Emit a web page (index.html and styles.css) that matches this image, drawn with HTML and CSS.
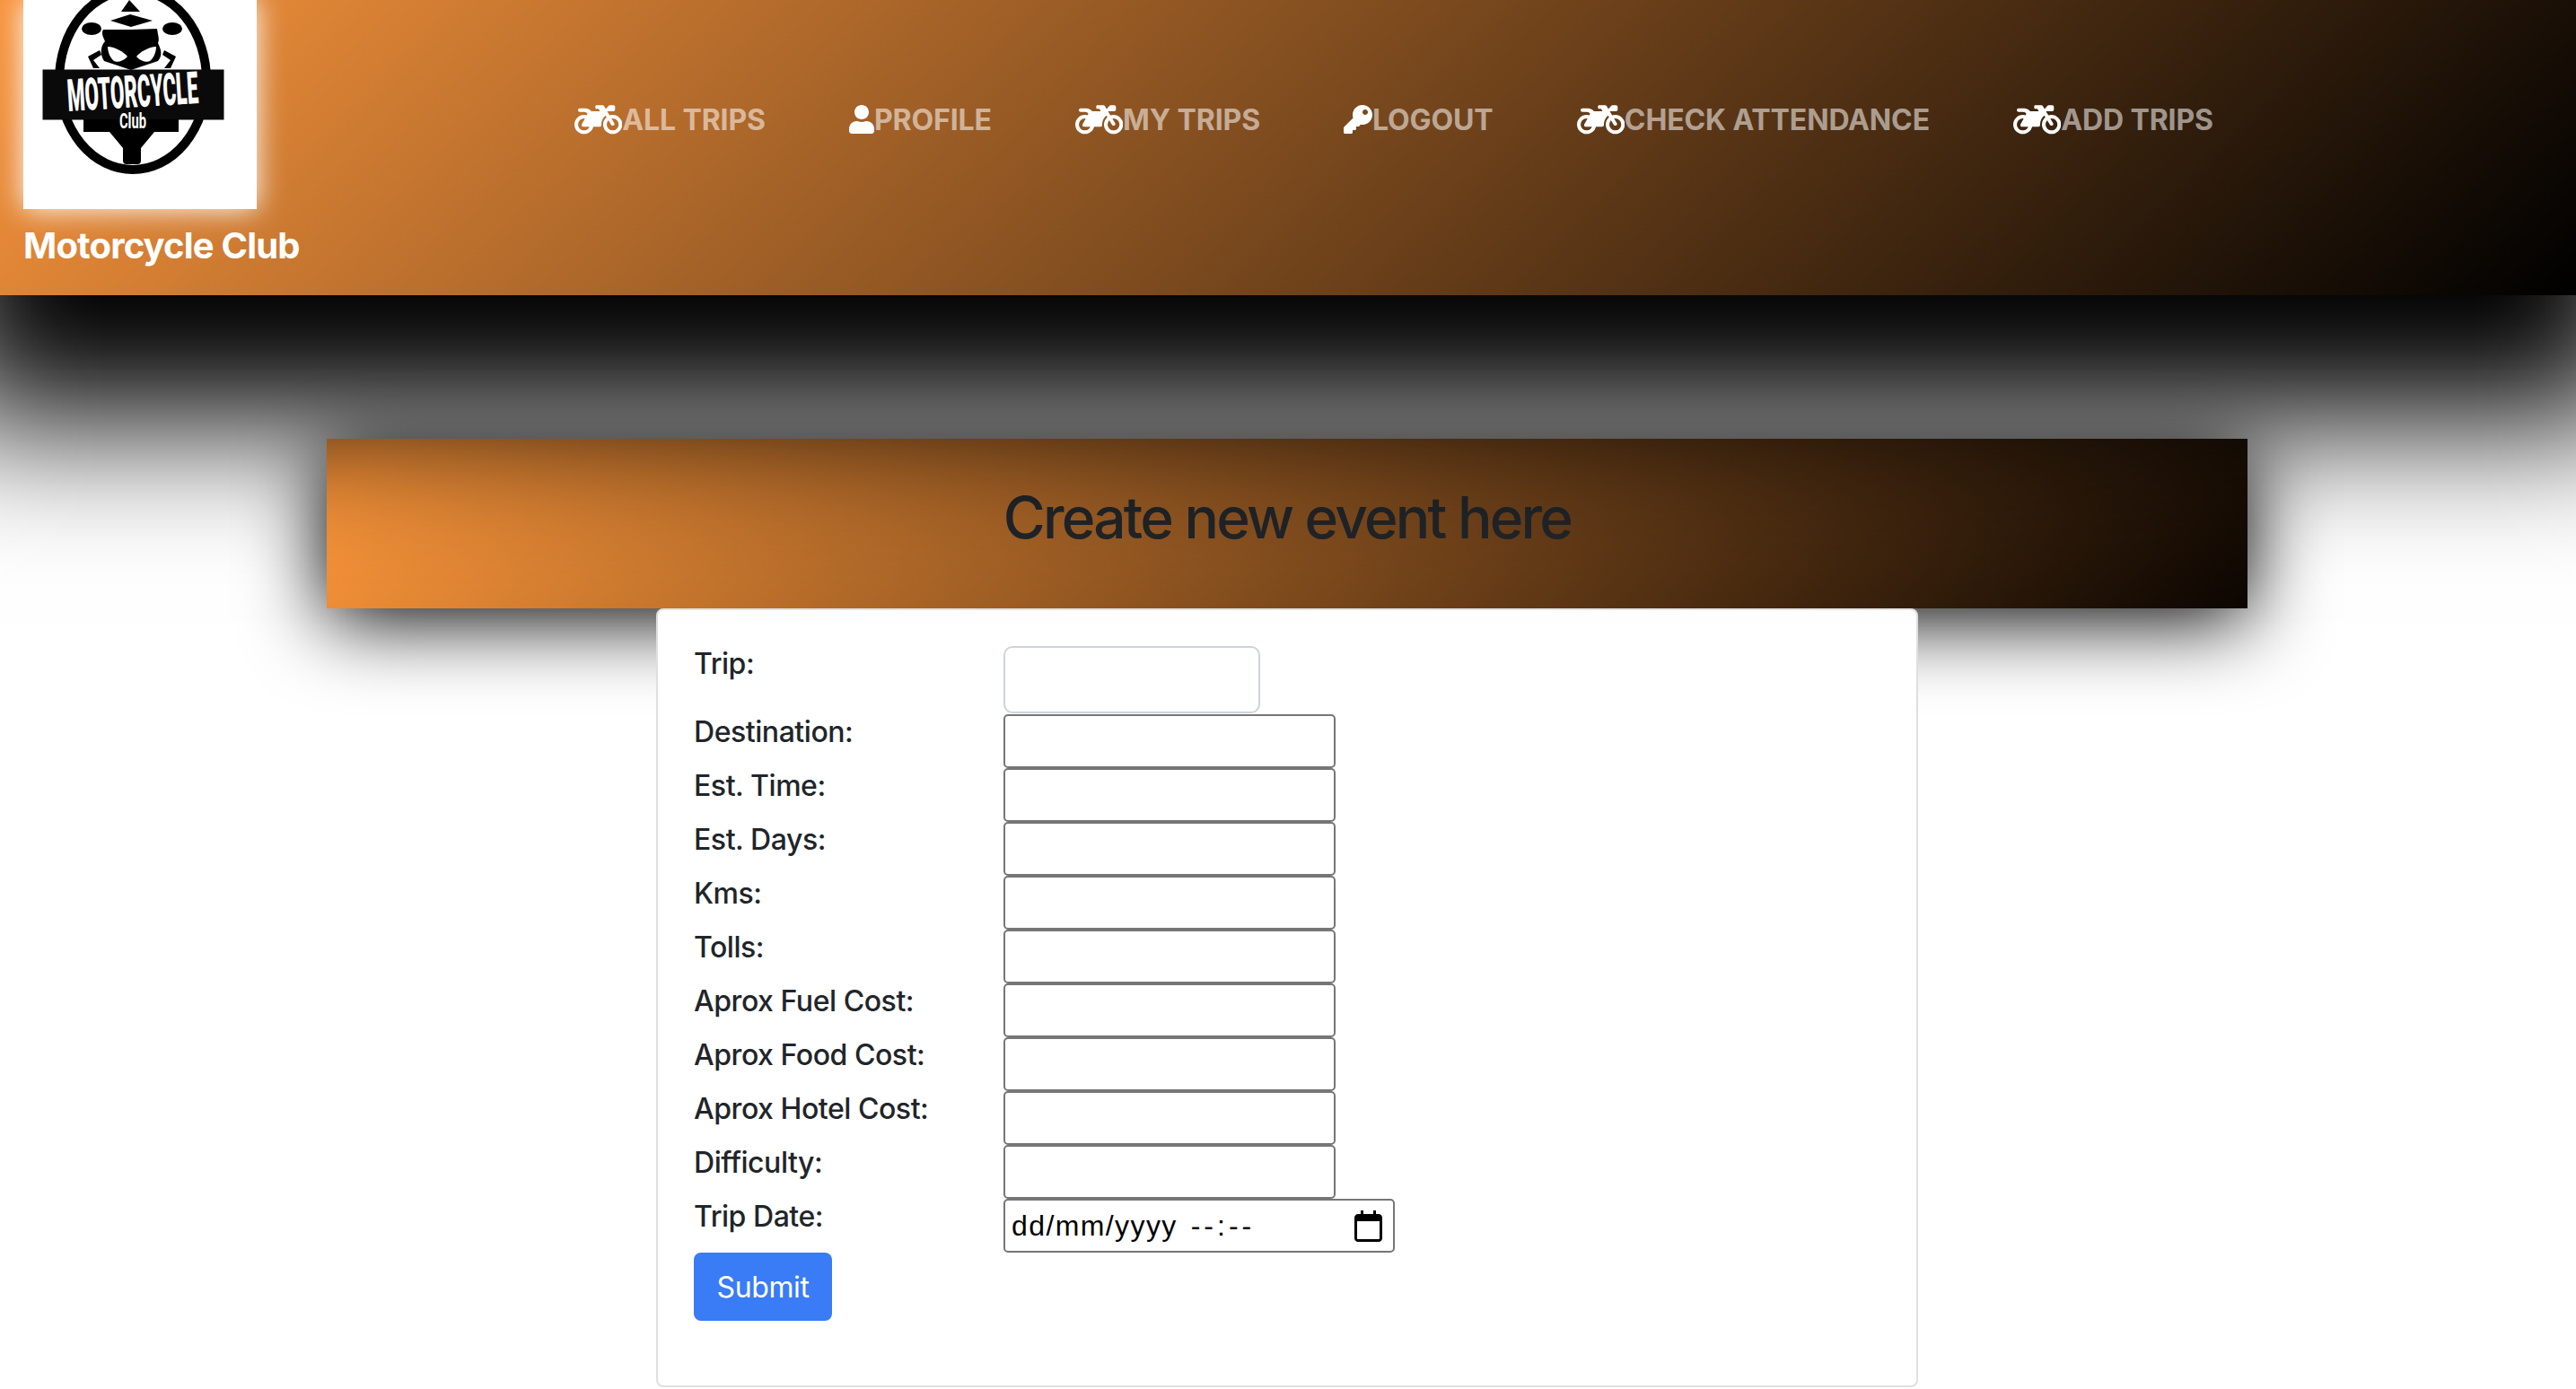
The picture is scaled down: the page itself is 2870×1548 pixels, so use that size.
FILE: index.html
```html
<!DOCTYPE html>
<html lang="en">
<head>
<meta charset="utf-8">
<title>Motorcycle Club</title>
<link rel="stylesheet" href="styles.css">
</head>
<body>
<svg class="defs" width="0" height="0" aria-hidden="true">
  <symbol id="bike" viewBox="0 0 640 512">
    <circle cx="128" cy="320" r="104" fill="none" stroke="#fff" stroke-width="48"/>
    <circle cx="512" cy="320" r="104" fill="none" stroke="#fff" stroke-width="48"/>
    <path fill="#fff" d="M72 104H128C183 104 210 121 228 144H341.6L322.4 112H296C287.2 112 280 104.8 280 96V80C280 71.2 287.2 64 296 64H376C384.4 64 392.2 68.4 396.6 75.7L419.4 113.7L456.9 71.9C461.4 66.9 467.9 64 474.7 64H520C533.3 64 544 74.7 544 88V120C544 133.3 533.3 144 520 144H437.6L532.6 302C539 313 536 327 525 333.5C514 340 499 337 492.5 326L416.2 202C377.5 233 358 280 360 327C360.6 340.6 349.7 352 336 352H118C100.6 352 89 334 98 318L175.8 176.8C166.7 163 152.5 152 128 152H72C58.9 152 48 141.3 48 128C48 114.7 58.9 104 72 104Z"/>
  </symbol>
  <symbol id="user" viewBox="0 0 448 512">
    <path fill="#fff" d="M224 256c70.7 0 128-57.3 128-128S294.7 0 224 0 96 57.3 96 128s57.3 128 128 128zm89.6 32h-16.7c-22.2 10.2-46.9 16-72.9 16s-50.6-5.8-72.9-16h-16.7C60.2 288 0 348.2 0 422.4V464c0 26.5 21.5 48 48 48h352c26.5 0 48-21.5 48-48v-41.6c0-74.2-60.2-134.4-134.4-134.4z"/>
  </symbol>
  <symbol id="key" viewBox="0 0 512 512">
    <path fill="#fff" d="M512 176.001C512 273.203 433.202 352 336 352c-11.22 0-22.19-1.062-32.827-3.069l-24.012 27.014A23.999 23.999 0 0 1 261.223 384H224v40c0 13.255-10.745 24-24 24h-40v40c0 13.255-10.745 24-24 24H24c-13.255 0-24-10.745-24-24v-78.059c0-6.365 2.529-12.47 7.029-16.971l161.802-161.802C163.108 213.814 160 195.271 160 176 160 78.798 238.797.001 335.999 0 433.488-.001 512 78.511 512 176.001zM336 128c0 26.51 21.49 48 48 48s48-21.49 48-48-21.49-48-48-48-48 21.49-48 48z"/>
  </symbol>
</svg>

<header class="site-header">
  <div class="brand">
    <div class="logo">
      <svg class="logo-art" viewBox="26 0 260 233" width="260" height="233">
        <ellipse cx="148" cy="89" rx="82" ry="100" fill="none" stroke="#000" stroke-width="10"/>
        <path d="M144 0L135 13H156Z" fill="#000"/>
        <path d="M123 23L145 16L170 23L146 30Z" fill="#000"/>
        <path d="M115 33L146 33L175 32C176 40 178 44 176 48C180 56 181 62 176 68L146 78L116 68C111 60 112 52 117 46C114 40 113 36 115 33Z" fill="#000"/>
        <ellipse cx="102" cy="32" rx="11" ry="7" fill="#000"/>
        <ellipse cx="192" cy="32" rx="11" ry="7" fill="#000"/>
        <path d="M120 52C128 52 138 58 142 63C138 68 130 70 127 68C123 65 120 58 120 52Z" fill="#fff"/>
        <path d="M174 52C166 52 156 58 152 63C156 68 164 70 167 68C171 65 174 58 174 52Z" fill="#fff"/>
        <path d="M98 63L111 56L113 61L104 67L111 76H104Z" fill="#000"/>
        <path d="M196 63L183 56L181 61L190 67L183 76H190Z" fill="#000"/>
        <rect x="47.500" y="77.500" width="202" height="56" fill="#0a0a0a"/>
        <rect x="93" y="133" width="106" height="14" fill="#000"/>
        <path d="M122 147L137 165V147ZM172 147L157 165V147Z" fill="#000"/>
        <rect x="137" y="140" width="20" height="43" rx="4" fill="#000"/>
        <text class="logo-word" x="76" y="124" transform="rotate(-3.500 76 124)" textLength="146" lengthAdjust="spacingAndGlyphs">MOTORCYCLE</text>
        <text class="logo-club" x="133" y="143" textLength="30" lengthAdjust="spacingAndGlyphs">Club</text>
      </svg>
    </div>
    <div class="brand-name">Motorcycle Club</div>
  </div>
  <nav class="main-nav">
    <a class="nav-link" href="#"><svg class="ico ico-bike"><use href="#bike"/></svg>ALL TRIPS</a>
    <a class="nav-link" href="#"><svg class="ico ico-user"><use href="#user"/></svg>PROFILE</a>
    <a class="nav-link" href="#"><svg class="ico ico-bike"><use href="#bike"/></svg>MY TRIPS</a>
    <a class="nav-link" href="#"><svg class="ico ico-key"><use href="#key"/></svg>LOGOUT</a>
    <a class="nav-link" href="#"><svg class="ico ico-bike"><use href="#bike"/></svg>CHECK ATTENDANCE</a>
    <a class="nav-link" href="#"><svg class="ico ico-bike"><use href="#bike"/></svg>ADD TRIPS</a>
  </nav>
</header>

<main class="content">
  <div class="banner"><h1 class="banner-title">Create new event here</h1></div>
  <form class="card">
    <label class="lbl" for="f1">Trip:</label><input id="f1" class="form-control">
    <label class="lbl" for="f2">Destination:</label><input id="f2" class="plain">
    <label class="lbl" for="f3">Est. Time:</label><input id="f3" class="plain">
    <label class="lbl" for="f4">Est. Days:</label><input id="f4" class="plain">
    <label class="lbl" for="f5">Kms:</label><input id="f5" class="plain">
    <label class="lbl" for="f6">Tolls:</label><input id="f6" class="plain">
    <label class="lbl" for="f7">Aprox Fuel Cost:</label><input id="f7" class="plain">
    <label class="lbl" for="f8">Aprox Food Cost:</label><input id="f8" class="plain">
    <label class="lbl" for="f9">Aprox Hotel Cost:</label><input id="f9" class="plain">
    <label class="lbl" for="f10">Difficulty:</label><input id="f10" class="plain">
    <span class="lbl">Trip Date:</span>
    <div class="date-field">
      <span class="date-part">dd/mm/yyyy</span><span class="date-time">--:--</span>
      <svg class="cal" viewBox="0 0 31 35" width="31" height="35"><path d="M7 0h3v4h11V0h3v4h3c2.200 0 4 1.800 4 4v23c0 2.200-1.800 4-4 4H4c-2.200 0-4-1.800-4-4V8c0-2.200 1.800-4 4-4h3zM3 12v19c0 .6.400 1 1 1h23c.6 0 1-.4 1-1V12z" fill="#000"/></svg>
    </div>
    <button class="submit" type="button">Submit</button>
  </form>
</main>
</body>
</html>
```
FILE: styles.css
```css
html, body {
  margin: 0;
  padding: 0;
  background: #fff;
  height: 1548px;
  overflow: hidden;
}
body {
  font-family: Inter, "Liberation Sans", sans-serif;
  color: #212529;
}
.defs { position: absolute; }

.site-header {
  position: relative;
  z-index: 1;
  height: 329px;
  display: flex;
  align-items: flex-start;
  background: linear-gradient(135deg, #f8943c 0%, #000 100%);
  box-shadow: 0 70px 150px 70px #000;
}
.brand {
  width: 614px;
  padding-left: 26px;
  flex: none;
}
.logo {
  width: 260px;
  height: 233px;
  background: #fff;
  box-shadow: 0 0 30px #fff;
}
.logo-art { display: block; }
.logo-word {
  font-family: Roboto, Inter, sans-serif;
  font-weight: 900;
  font-size: 50px;
  fill: #fff;
}
.logo-club {
  font-family: Roboto, Inter, sans-serif;
  font-weight: 700;
  font-size: 24px;
  fill: #fff;
}
.brand-name {
  margin-top: 11px;
  font-size: 40px;
  line-height: 60px;
  font-weight: 700;
  letter-spacing: -.85px;
  color: #fff;
  white-space: nowrap;
}
.main-nav {
  display: flex;
  align-items: center;
  gap: 93px;
  margin-top: 105px;
}
.nav-link {
  display: flex;
  align-items: center;
  height: 56px;
  font-size: 32px;
  font-weight: 700;
  letter-spacing: -.12px;
  color: rgba(255, 255, 255, .55);
  text-decoration: none;
  white-space: nowrap;
}
.ico { display: block; flex: none; }
.ico-bike { width: 53.3px; height: 42.7px; }
.ico-user { width: 28px; height: 32px; }
.ico-key { width: 32px; height: 32px; }

.content {
  display: flex;
  flex-direction: column;
  align-items: center;
  padding: 160px 2px 0 0;
}
.banner {
  width: 2140px;
  height: 189px;
  box-sizing: border-box;
  padding-bottom: 14px;
  display: flex;
  align-items: center;
  justify-content: center;
  background: linear-gradient(135deg, #fa953a 3%, #0c0602 100%);
  box-shadow: 0 12px 90px #000;
}
.banner-title {
  margin: 0;
  font-size: 64px;
  line-height: 77px;
  font-weight: 500;
  letter-spacing: -2.75px;
  color: #212529;
}
.card {
  position: relative;
  width: 1406px;
  height: 868px;
  box-sizing: border-box;
  display: grid;
  grid-template-columns: 345px 1fr;
  grid-auto-rows: 60px;
  grid-template-rows: 76px;
  align-items: start;
  justify-items: start;
  padding: 40px 39px 0 40px;
  background: #fff;
  border: 2px solid #dfdfdf;
  border-top-color: #e4e4e4;
  border-radius: 8px;
}
.lbl {
  font-size: 32px;
  line-height: 40px;
  font-weight: 500;
  letter-spacing: -.45px;
}
.form-control {
  width: 286px;
  height: 75px;
  box-sizing: border-box;
  background: #fff;
  border: 2px solid #ced4da;
  border-radius: 10px;
  outline: 0;
  margin: 0;
}
.plain {
  width: 370px;
  height: 60px;
  box-sizing: border-box;
  background: #fff;
  border: 2px solid #767676;
  border-radius: 5px;
  outline: 0;
  margin: 0;
}
.date-field {
  width: 436px;
  height: 60px;
  box-sizing: border-box;
  display: flex;
  align-items: center;
  padding: 0 12px 0 7px;
  gap: 15px;
  background: #fff;
  border: 2px solid #767676;
  border-radius: 5px;
  font-family: "Liberation Sans", Arial, sans-serif;
  font-size: 32px;
  color: #000;
}
.date-part { letter-spacing: 1.4px; }
.date-time { letter-spacing: 4px; }
.cal { margin-left: auto; }
.submit {
  grid-column: 1;
  width: 154px;
  height: 76px;
  padding: 0;
  border: 0;
  border-radius: 8px;
  background: #3a7bf6;
  color: #fff;
  font-family: Inter, sans-serif;
  font-size: 32px;
  letter-spacing: -.4px;
}
```
